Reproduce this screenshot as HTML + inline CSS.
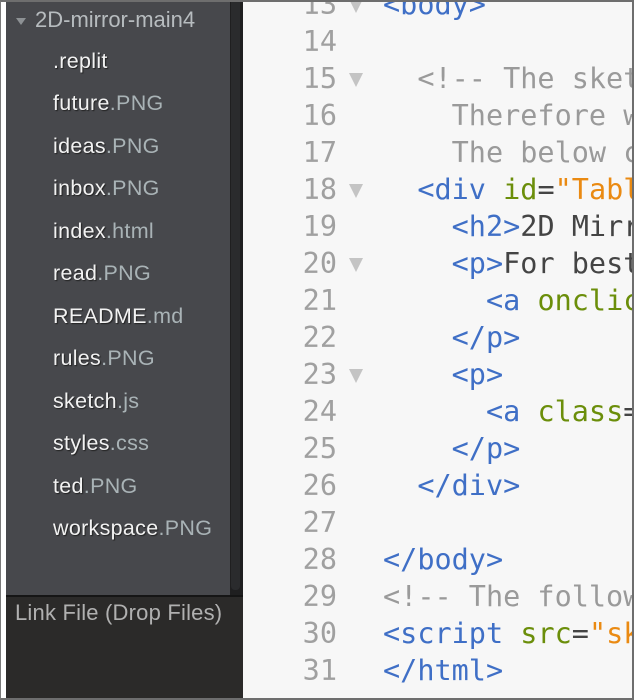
<!DOCTYPE html>
<html><head><meta charset="utf-8"><style>
*{margin:0;padding:0;box-sizing:border-box}
html,body{width:634px;height:700px;overflow:hidden;background:#fff}
#frame{position:absolute;left:0;top:0;width:634px;height:700px;border:1px solid #7a7a7a;border-top:2px solid #6e6e6e;border-bottom:2px solid #6e6e6e;border-right:2px solid #6e6e6e}
#side{position:absolute;left:6px;top:2px;width:224px;height:593px;background:#47484c;overflow:hidden;font-family:"Liberation Sans",sans-serif}
#track{position:absolute;left:230px;top:2px;width:13px;height:593px;background:#1f1f20}
#thumb{position:absolute;left:231px;top:2px;width:9px;height:588px;background:#2a2b2d;border-radius:0 0 4px 4px}
#bottom{position:absolute;left:6px;top:595px;width:237px;height:103px;background:#2b2a29;border-top:2px solid #151515}
#bottom div{position:absolute;left:9px;top:3px;color:#b0b0b0;font:22px "Liberation Sans",sans-serif;letter-spacing:0.2px}
.hdr{position:absolute;left:29px;top:5px;color:#b7bcbf;font-size:22px;white-space:nowrap}
.hdr:before{content:"";position:absolute;left:-19px;top:11px;border-left:5px solid transparent;border-right:5px solid transparent;border-top:7px solid #8d9194}
.f{position:absolute;left:47px;color:#f2f2f2;font-size:21.5px;white-space:nowrap;text-shadow:1px 1px 1px #222;letter-spacing:0.3px}
.f span{color:#a9b3b6;text-shadow:none}
#ed{position:absolute;left:243px;top:2px;width:389px;height:696px;background:#f7f7f7;overflow:hidden;font-family:"DejaVu Sans Mono","Liberation Mono",monospace;font-size:28.5px}
.l{position:absolute;left:0;height:37px;line-height:37px;white-space:pre;width:1000px}
.n{position:absolute;right:906px;color:#a0a0a0;text-align:right}
.a{position:absolute;left:106px;top:13px;border-left:7px solid transparent;border-right:7px solid transparent;border-top:14px solid #c4c4c4}
.c{position:absolute;left:140px;color:#444}
.t{color:#3f6fc6}.at{color:#6b8e0a}.s{color:#ea8a12}.cm{color:#9a9a9a}
</style></head><body>
<div id="frame"></div>
<div id="side">
<div class="hdr">2D-mirror-main4</div>
<div class="f" style="top:47px">.replit</div>
<div class="f" style="top:89px">future<span>.PNG</span></div>
<div class="f" style="top:132px">ideas<span>.PNG</span></div>
<div class="f" style="top:174px">inbox<span>.PNG</span></div>
<div class="f" style="top:217px">index<span>.html</span></div>
<div class="f" style="top:259px">read<span>.PNG</span></div>
<div class="f" style="top:302px">README<span>.md</span></div>
<div class="f" style="top:344px">rules<span>.PNG</span></div>
<div class="f" style="top:387px">sketch<span>.js</span></div>
<div class="f" style="top:429px">styles<span>.css</span></div>
<div class="f" style="top:472px">ted<span>.PNG</span></div>
<div class="f" style="top:514px">workspace<span>.PNG</span></div>
</div>
<div id="track"></div><div id="thumb"></div>
<div id="bottom"><div>Link File (Drop Files)</div></div>
<div id="ed">
<div class="l" style="top:-16px"><span class="n">13</span><i class="a"></i><span class="c"><span class="t">&lt;body&gt;</span></span></div>
<div class="l" style="top:21px"><span class="n">14</span></div>
<div class="l" style="top:58px"><span class="n">15</span><i class="a"></i><span class="c cm">  &lt;!-- The sketch</span></div>
<div class="l" style="top:95px"><span class="n">16</span><span class="c cm">    Therefore we</span></div>
<div class="l" style="top:132px"><span class="n">17</span><span class="c cm">    The below co</span></div>
<div class="l" style="top:169px"><span class="n">18</span><i class="a"></i><span class="c">  <span class="t">&lt;div</span> <span class="at">id</span>=<span class="s">"Table</span></span></div>
<div class="l" style="top:206px"><span class="n">19</span><span class="c">    <span class="t">&lt;h2&gt;</span>2D Mirror</span></div>
<div class="l" style="top:243px"><span class="n">20</span><i class="a"></i><span class="c">    <span class="t">&lt;p&gt;</span>For best</span></div>
<div class="l" style="top:280px"><span class="n">21</span><span class="c">      <span class="t">&lt;a</span> <span class="at">onclick</span></span></div>
<div class="l" style="top:317px"><span class="n">22</span><span class="c">    <span class="t">&lt;/p&gt;</span></span></div>
<div class="l" style="top:354px"><span class="n">23</span><i class="a"></i><span class="c">    <span class="t">&lt;p&gt;</span></span></div>
<div class="l" style="top:391px"><span class="n">24</span><span class="c">      <span class="t">&lt;a</span> <span class="at">class</span>=</span></div>
<div class="l" style="top:428px"><span class="n">25</span><span class="c">    <span class="t">&lt;/p&gt;</span></span></div>
<div class="l" style="top:465px"><span class="n">26</span><span class="c">  <span class="t">&lt;/div&gt;</span></span></div>
<div class="l" style="top:502px"><span class="n">27</span></div>
<div class="l" style="top:539px"><span class="n">28</span><span class="c"><span class="t">&lt;/body&gt;</span></span></div>
<div class="l" style="top:576px"><span class="n">29</span><span class="c cm">&lt;!-- The following</span></div>
<div class="l" style="top:613px"><span class="n">30</span><span class="c"><span class="t">&lt;script</span> <span class="at">src</span>=<span class="s">"sketch</span></span></div>
<div class="l" style="top:650px"><span class="n">31</span><span class="c"><span class="t">&lt;/html&gt;</span></span></div>
</div>
</body></html>
